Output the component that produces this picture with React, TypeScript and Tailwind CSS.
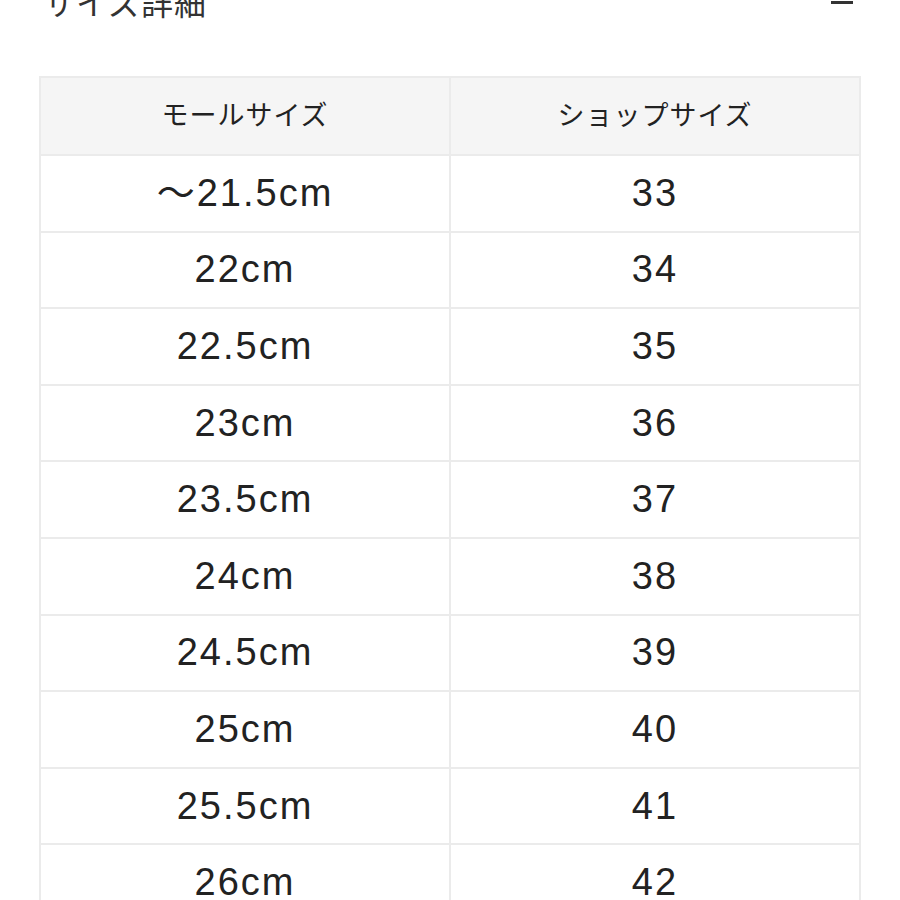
/* Size detail table — mall size vs shop size */

const rows: [string, string][] = [
  ["～21.5cm", "33"],
  ["22cm", "34"],
  ["22.5cm", "35"],
  ["23cm", "36"],
  ["23.5cm", "37"],
  ["24cm", "38"],
  ["24.5cm", "39"],
  ["25cm", "40"],
  ["25.5cm", "41"],
  ["26cm", "42"],
];

export default function App() {
  return (
    <div
      className="w-[900px] h-[900px] overflow-hidden bg-white text-[#222]"
      style={{ fontFamily: '"Liberation Sans", "Noto Sans CJK JP", sans-serif' }}
    >
      {/* Section header */}
      <div className="flex justify-between items-start h-[76px] pl-[43px] pr-[47px]">
        <h2 className="text-[32px] leading-none -mt-[12px] text-[#333] tracking-[1px]">サイズ詳細</h2>
        <div className="w-[22px] h-[3px] bg-[#333] mt-[1px]" />
      </div>

      <table className="ml-[39px] w-[822px] border-collapse table-fixed">
        <thead>
          <tr className="h-[78px] bg-[#f5f5f5]">
            <th className="w-1/2 border-2 border-[#ebebeb] font-normal text-[27px] tracking-[1px]">モールサイズ</th>
            <th className="w-1/2 border-2 border-[#ebebeb] font-normal text-[27px] tracking-[1px]">ショップサイズ</th>
          </tr>
        </thead>
        <tbody>
          {rows.map(([mall, shop]) => (
            <tr key={mall} className="h-[76.6px]">
              <td className="border-2 border-[#ebebeb] text-center text-[38px] tracking-[2px]">{mall}</td>
              <td className="border-2 border-[#ebebeb] text-center text-[38px] tracking-[2px]">{shop}</td>
            </tr>
          ))}
        </tbody>
      </table>
    </div>
  );
}
